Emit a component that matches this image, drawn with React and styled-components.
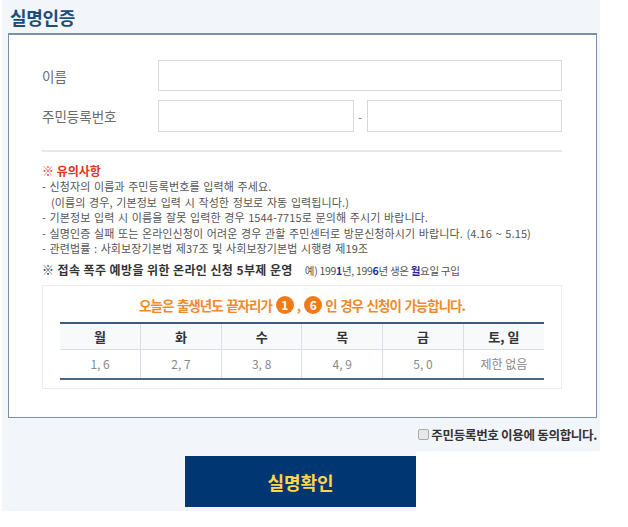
import styled, { createGlobalStyle } from "styled-components"

const GlobalStyle = createGlobalStyle`
    body {
        margin: 0;
        background: #ffffff;
        font-family: "Noto Sans CJK KR", "Noto Sans", sans-serif;
    }
`

const Page = styled.div`
    width: 628px;
`

const TopPanel = styled.div`
    margin-left: 2px;
    width: 598px;
    background: #f2f6fa;
    padding: 6px 0 0 6px;
    box-sizing: border-box;
`

const Title = styled.h2`
    margin: 0 0 0 2px;
    font-size: 18px;
    line-height: 22px;
    font-weight: 700;
    color: #1f4c7c;
    letter-spacing: -0.3px;
`

const FormBox = styled.div`
    margin-top: 5px;
    width: 589px;
    height: 385px;
    box-sizing: border-box;
    background: #ffffff;
    border: 1px solid #7b91a8;
    border-top: 2px solid #7b91a8;
    padding: 25px 34px 0 33px;
`

const FieldRow = styled.div`
    display: grid;
    grid-template-columns: 116px 1fr;
    align-items: center;
    margin-bottom: ${p => p.$gap || 0}px;
`

const Label = styled.label`
    font-size: 13.5px;
    color: #6b6b6b;
    letter-spacing: 0;
`

const Input = styled.input`
    box-sizing: border-box;
    width: 100%;
    height: ${p => p.$h || 31}px;
    border: 1px solid #d9d9d9;
    background: #fff;
    outline: none;
    padding: 0 8px;
`

const SplitInputs = styled.div`
    display: grid;
    grid-template-columns: 1fr 13px 1fr;
    align-items: center;
`

const Dash = styled.span`
    font-size: 12px;
    color: #777;
    text-align: center;
`

const Divider = styled.hr`
    margin: 18px 0 0 0;
    border: 0;
    height: 2px;
    background: #e8e8e8;
`

const Notes = styled.div`
    margin-top: 11px;
    font-size: 11px;
    line-height: 15.5px;
    color: #555;
    letter-spacing: 0.1px;
    word-spacing: 1px;
`

const NoteTitle = styled.div`
    font-size: 12px;
    font-weight: 700;
    color: #e2321e;
    line-height: 16px;
    letter-spacing: 0;
    word-spacing: 0;
`

const NoteList = styled.ul`
    margin: 0;
    padding: 0;
    list-style: none;
`

const NoteItem = styled.li`
    padding-left: 9px;
    text-indent: -9px;
`

const SubLine = styled.span`
    display: block;
    text-indent: 0;
`

const Schedule = styled.div`
    margin-top: 5px;
    font-size: 10.5px;
    line-height: 16px;
    color: #555;
    letter-spacing: -0.3px;
`

const ScheduleTitle = styled.b`
    font-size: 12px;
    letter-spacing: 0.4px;
    color: #333;
    margin-right: 12px;
`

const Em = styled.b`
    color: #1b2a9c;
`

const DayBox = styled.div`
    margin-top: 6px;
    border: 1px solid #ececec;
    padding: 9px 17px 16px 17px;
    height: 104px;
    box-sizing: border-box;
`

const DayTitle = styled.div`
    text-align: center;
    font-size: 13.5px;
    font-weight: 700;
    color: #f08a2c;
    letter-spacing: -1px;
    word-spacing: 1.5px;
    line-height: 20px;
`

const Circle = styled.span`
    display: inline-flex;
    align-items: center;
    justify-content: center;
    vertical-align: 1px;
    width: 18px;
    height: 18px;
    margin: 0 3px 0 4px;
    border-radius: 50%;
    background: #f07a18;
    color: #fff;
    font-size: 12px;
    font-weight: 700;
    letter-spacing: 0;
    line-height: 1;
`

const Table = styled.table`
    margin-top: 7px;
    width: 100%;
    border-collapse: collapse;
    border-top: 2px solid #3b5a7e;
    border-bottom: 2px solid #4a6787;
    table-layout: fixed;
`

const Th = styled.th`
    height: 23px;
    font-size: 13px;
    font-weight: 700;
    color: #333;
    background: #f7f9fb;
    border-left: 1px solid #d8dfe7;
    border-bottom: 1px solid #d8dfe7;
    &:first-child { border-left: 0; }
`

const Td = styled.td`
    height: 26px;
    text-align: center;
    font-size: 12px;
    color: #888;
    border-left: 1px solid #d8dfe7;
    &:first-child { border-left: 0; }
`

const AgreeRow = styled.div`
    display: flex;
    justify-content: flex-end;
    align-items: center;
    height: 33px;
    padding-right: 3px;
    font-size: 12.5px;
    font-weight: 700;
    color: #333;
    letter-spacing: -0.3px;
`

const Check = styled.span`
    width: 9px;
    height: 9px;
    border: 1px solid #aaa;
    background: #e8e8e8;
    border-radius: 2px;
    margin-right: 2px;
`

const BottomPanel = styled.div`
    margin-left: 2px;
    width: 414px;
    height: 60px;
    background: #f2f6fa;
    padding: 5px 0 0 183px;
    box-sizing: border-box;
`

const Button = styled.button`
    width: 231px;
    height: 51px;
    border: 0;
    background: #003671;
    color: #ffd54a;
    font-family: inherit;
    font-size: 18px;
    font-weight: 700;
    cursor: pointer;
`

const days = [
    ["월", "1, 6"],
    ["화", "2, 7"],
    ["수", "3, 8"],
    ["목", "4, 9"],
    ["금", "5, 0"],
    ["토, 일", "제한 없음"],
]

export default function App() {
    return (
        <Page>
            <GlobalStyle />
            <TopPanel>
                <Title>실명인증</Title>
                <FormBox>
                    <FieldRow $gap={9}>
                        <Label>이름</Label>
                        <Input />
                    </FieldRow>
                    <FieldRow>
                        <Label>주민등록번호</Label>
                        <SplitInputs>
                            <Input $h={32} />
                            <Dash>-</Dash>
                            <Input $h={32} type="password" />
                        </SplitInputs>
                    </FieldRow>
                    <Divider />
                    <Notes>
                        <NoteTitle>※ 유의사항</NoteTitle>
                        <NoteList>
                            <NoteItem>
                                - 신청자의 이름과 주민등록번호를 입력해 주세요.
                                <SubLine>(이름의 경우, 기본정보 입력 시 작성한 정보로 자동 입력됩니다.)</SubLine>
                            </NoteItem>
                            <NoteItem>- 기본정보 입력 시 이름을 잘못 입력한 경우 1544-7715로 문의해 주시기 바랍니다.</NoteItem>
                            <NoteItem>- 실명인증 실패 또는 온라인신청이 어려운 경우 관할 주민센터로 방문신청하시기 바랍니다. (4.16 ~ 5.15)</NoteItem>
                            <NoteItem>- 관련법률 : 사회보장기본법 제37조 및 사회보장기본법 시행령 제19조</NoteItem>
                        </NoteList>
                    </Notes>
                    <Schedule>
                        <ScheduleTitle>※ 접속 폭주 예방을 위한 온라인 신청 5부제 운영</ScheduleTitle>
                        예) 199<Em>1</Em>년, 199<Em>6</Em>년 생은 <Em>월</Em>요일 구입
                    </Schedule>
                    <DayBox>
                        <DayTitle>
                            오늘은 출생년도 끝자리가<Circle>1</Circle>,<Circle>6</Circle>인 경우 신청이 가능합니다.
                        </DayTitle>
                        <Table>
                            <thead>
                                <tr>{days.map(d => <Th key={d[0]}>{d[0]}</Th>)}</tr>
                            </thead>
                            <tbody>
                                <tr>{days.map(d => <Td key={d[0]}>{d[1]}</Td>)}</tr>
                            </tbody>
                        </Table>
                    </DayBox>
                </FormBox>
                <AgreeRow>
                    <Check />주민등록번호 이용에 동의합니다.
                </AgreeRow>
            </TopPanel>
            <BottomPanel>
                <Button>실명확인</Button>
            </BottomPanel>
        </Page>
    )
}
